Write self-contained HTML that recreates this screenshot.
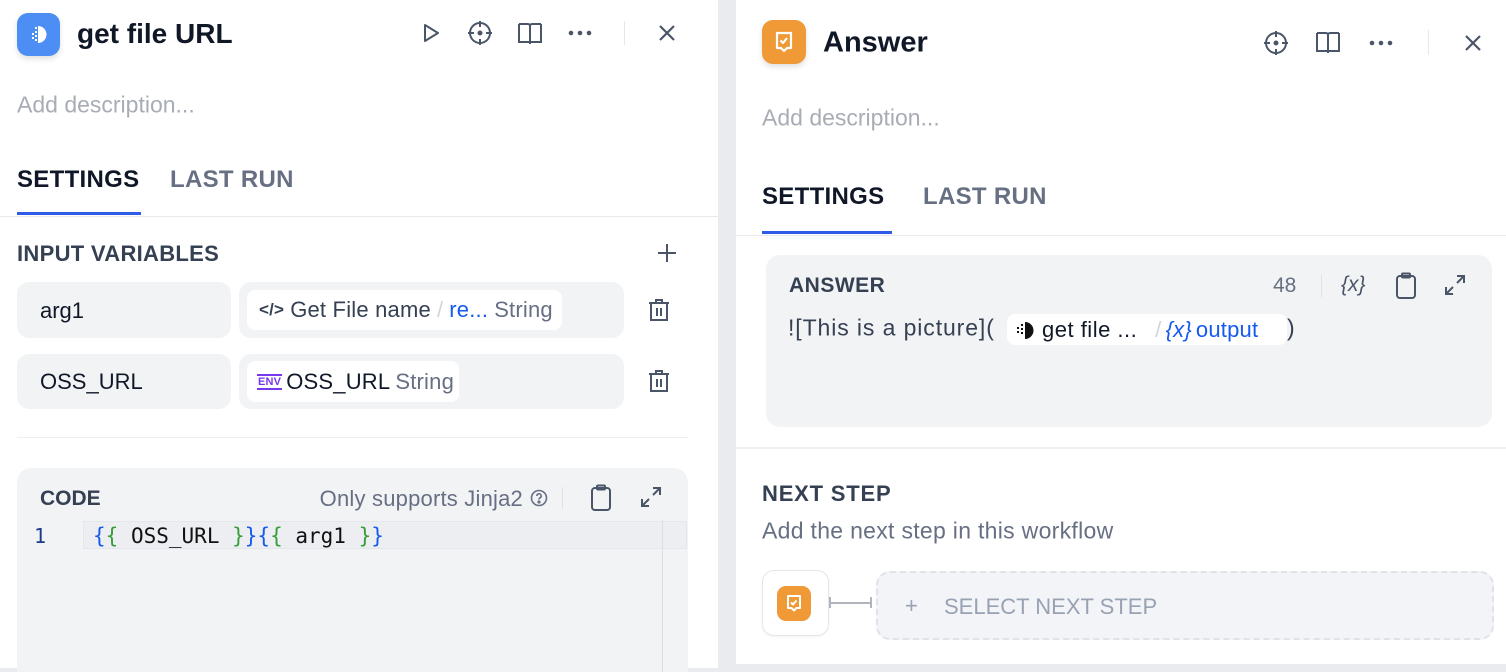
<!DOCTYPE html>
<html><head><meta charset="utf-8"><style>
*{margin:0;padding:0;box-sizing:border-box}
html,body{width:1506px;height:672px;overflow:hidden}
body{background:#eaebee;font-family:"Liberation Sans",sans-serif;position:relative;color:#101828}
.a{position:absolute;white-space:nowrap}
.panel{position:absolute;background:#fff}
.ic{position:absolute;transform:translate(-50%,-50%)}
svg{display:block}
.tab{font-size:24px;letter-spacing:.3px;font-weight:bold;transform:translateY(-50%)}
.sec{font-size:22px;letter-spacing:.3px;font-weight:bold;color:#354052;transform:translateY(-50%)}
.box{position:absolute;background:#f2f3f5;border-radius:12px}
.chip{position:absolute;background:#fff;border-radius:8px;font-size:22px;letter-spacing:.2px;color:#354052;display:flex;align-items:center;overflow:hidden}
.mid{transform:translateY(-50%)}
</style></head><body>
<div class="panel" style="left:0;top:0;width:718px;height:668px"></div>
<div class="panel" style="left:736px;top:0;width:770px;height:664px"></div>

<!-- LEFT -->
<div class="a" style="left:17px;top:13px;width:43px;height:43px;background:#4d8ef5;border-radius:11px;box-shadow:0 3px 6px rgba(0,0,0,.12)">
<svg width="43" height="43"><path d="M21 13 a8.5 8.5 0 0 1 0 17z" fill="#fff"/><g fill="#fff"><rect x="18" y="14" width="2" height="2"/><rect x="18" y="18" width="2" height="2"/><rect x="18" y="22" width="2" height="2"/><rect x="18" y="26" width="2" height="2"/><rect x="15" y="20" width="2" height="2"/><rect x="15" y="24" width="2" height="2"/></g></svg></div>
<div class="a mid" style="left:77px;top:34px;font-size:28px;font-weight:bold">get file URL</div>
<div class="ic" style="left:431px;top:33px"><svg width="22" height="22" fill="none" stroke="#4a5568" stroke-width="2" stroke-linejoin="round"><path d="M5 3l13 8-13 8z"/></svg></div>
<div class="ic" style="left:480px;top:33px"><svg width="26" height="26" fill="none" stroke="#4a5568" stroke-width="2"><circle cx="13" cy="13" r="10"/><path d="M13 1v6M13 19v6M1 13h6M19 13h6"/><circle cx="13" cy="13" r="1.5" fill="#4a5568"/></svg></div>
<div class="ic" style="left:530px;top:34px"><svg width="26" height="26" fill="none" stroke="#4a5568" stroke-width="2"><path d="M2 3h9a2 2 0 0 1 2 2v18M24 3h-9a2 2 0 0 0-2 2M2 3v18h22V3"/></svg></div>
<div class="ic" style="left:580px;top:33px"><svg width="24" height="6" fill="#4a5568"><circle cx="3" cy="3" r="2.3"/><circle cx="12" cy="3" r="2.3"/><circle cx="21" cy="3" r="2.3"/></svg></div>
<div class="a" style="left:624px;top:21px;width:1px;height:24px;background:#e5e7eb"></div>
<div class="ic" style="left:667px;top:33px"><svg width="18" height="18" stroke="#4a5568" stroke-width="2.2"><path d="M2 2l14 14M16 2L2 16"/></svg></div>
<div class="a mid" style="left:17px;top:105px;font-size:23px;color:#a8adb5">Add description...</div>
<div class="a tab" style="left:17px;top:180px;color:#101828">SETTINGS</div>
<div class="a tab" style="left:170px;top:180px;color:#676f83">LAST RUN</div>
<div class="a" style="left:17px;top:212px;width:124px;height:3px;background:#2f5be8"></div>
<div class="a" style="left:0;top:216px;width:718px;height:1px;background:#e8e9ec"></div>
<div class="a sec" style="left:17px;top:254px">INPUT VARIABLES</div>
<div class="ic" style="left:667px;top:253px"><svg width="20" height="20" stroke="#4a5568" stroke-width="2"><path d="M10 1v18M1 10h18"/></svg></div>

<div class="box" style="left:17px;top:282px;width:214px;height:56px"></div>
<div class="a mid" style="left:40px;top:311px;font-size:22px;color:#101828">arg1</div>
<div class="box" style="left:239px;top:282px;width:385px;height:56px"></div>
<div class="chip" style="left:247px;top:290px;width:315px;height:40px;padding-left:12px"><span style="font-size:17px;font-weight:bold;margin-right:6px">&lt;/&gt;</span>Get File name<span style="color:#d0d5dc;margin:0 6px">/</span><span style="color:#155aef">re...</span><span style="color:#676f83;margin-left:6px">String</span></div>
<div class="ic" style="left:659px;top:310px"><svg width="22" height="24" fill="none" stroke="#4a5568" stroke-width="2"><path d="M1 5h20M8 5V2h6v3M3 5v17h16V5M9 10v8M13 10v8"/></svg></div>

<div class="box" style="left:17px;top:354px;width:214px;height:55px"></div>
<div class="a mid" style="left:40px;top:382px;font-size:22px;color:#101828">OSS_URL</div>
<div class="box" style="left:239px;top:354px;width:385px;height:55px"></div>
<div class="chip" style="left:247px;top:361px;width:212px;height:41px;padding-left:10px"><span style="font-size:11px;font-weight:bold;color:#7839ee;border:2px solid #7839ee;border-left:none;border-right:none;padding:0 1px;margin-right:4px;line-height:12px">ENV</span><span style="color:#101828">OSS_URL</span><span style="color:#676f83;margin-left:5px">String</span></div>
<div class="ic" style="left:659px;top:381px"><svg width="22" height="24" fill="none" stroke="#4a5568" stroke-width="2"><path d="M1 5h20M8 5V2h6v3M3 5v17h16V5M9 10v8M13 10v8"/></svg></div>

<div class="a" style="left:17px;top:437px;width:671px;height:1px;background:#eef0f2"></div>
<div class="box" style="left:17px;top:468px;width:671px;height:204px;border-radius:14px 14px 0 0"></div>
<div class="a mid" style="left:40px;top:499px;font-size:21px;font-weight:bold;color:#354052">CODE</div>
<div class="a mid" style="right:983px;top:499px;font-size:22px;letter-spacing:.2px;color:#676f83">Only supports Jinja2</div>
<div class="ic" style="left:539px;top:498px"><svg width="18" height="18" fill="none" stroke="#676f83" stroke-width="1.6"><circle cx="9" cy="9" r="7.5"/><path d="M6.8 7a2.2 2.2 0 1 1 3 2c-.6.3-.8.7-.8 1.5"/><circle cx="9" cy="13" r=".8" fill="#676f83"/></svg></div>
<div class="a" style="left:562px;top:487px;width:1px;height:22px;background:#dfe1e5"></div>
<div class="ic" style="left:601px;top:498px"><svg width="22" height="28" fill="none" stroke="#4a5568" stroke-width="2"><rect x="2" y="4" width="18" height="22" rx="3"/><rect x="7" y="1.5" width="8" height="4" rx="1"/></svg></div>
<div class="ic" style="left:651px;top:497px"><svg width="22" height="22" fill="none" stroke="#4a5568" stroke-width="2"><path d="M13 2h7v7M20 2l-7 7M9 20H2v-7M2 20l7-7"/></svg></div>
<div class="a" style="left:83px;top:521px;width:604px;height:28px;background:#eceef1;border:1px solid #e4e6ea"></div>
<div class="a" style="left:662px;top:520px;width:1px;height:152px;background:#dcdee2"></div>
<div class="a mid" style="left:34px;top:536px;font-family:'DejaVu Sans Mono',monospace;font-size:20px;color:#1e3a8a">1</div>
<div class="a mid" style="left:93px;top:536px;font-family:'DejaVu Sans Mono',monospace;font-size:21px;color:#111"><span style="color:#155aef">{</span><span style="color:#3a9c3a">{</span> OSS_URL <span style="color:#3a9c3a">}</span><span style="color:#155aef">}{</span><span style="color:#3a9c3a">{</span> arg1 <span style="color:#3a9c3a">}</span><span style="color:#155aef">}</span></div>

<!-- RIGHT -->
<div class="a" style="left:762px;top:20px;width:44px;height:44px;background:#ef9a37;border-radius:11px;box-shadow:0 3px 6px rgba(0,0,0,.12)">
<svg width="44" height="44" fill="none" stroke="#fff" stroke-width="2.2" stroke-linejoin="round"><path d="M15 13h14v15h-4l-3 3-3-3h-4z"/><path d="M18.5 20.5l2.5 2.5 4-5"/></svg></div>
<div class="a mid" style="left:823px;top:43px;font-size:29px;font-weight:bold">Answer</div>
<div class="ic" style="left:1276px;top:43px"><svg width="26" height="26" fill="none" stroke="#4a5568" stroke-width="2"><circle cx="13" cy="13" r="10"/><path d="M13 1v6M13 19v6M1 13h6M19 13h6"/><circle cx="13" cy="13" r="1.5" fill="#4a5568"/></svg></div>
<div class="ic" style="left:1328px;top:43px"><svg width="26" height="26" fill="none" stroke="#4a5568" stroke-width="2"><path d="M2 3h9a2 2 0 0 1 2 2v18M24 3h-9a2 2 0 0 0-2 2M2 3v18h22V3"/></svg></div>
<div class="ic" style="left:1381px;top:43px"><svg width="24" height="6" fill="#4a5568"><circle cx="3" cy="3" r="2.3"/><circle cx="12" cy="3" r="2.3"/><circle cx="21" cy="3" r="2.3"/></svg></div>
<div class="a" style="left:1428px;top:30px;width:1px;height:25px;background:#e5e7eb"></div>
<div class="ic" style="left:1473px;top:43px"><svg width="18" height="18" stroke="#4a5568" stroke-width="2.2"><path d="M2 2l14 14M16 2L2 16"/></svg></div>
<div class="a mid" style="left:762px;top:118px;font-size:23px;color:#a8adb5">Add description...</div>
<div class="a tab" style="left:762px;top:197px;color:#101828">SETTINGS</div>
<div class="a tab" style="left:923px;top:197px;color:#676f83">LAST RUN</div>
<div class="a" style="left:762px;top:231px;width:130px;height:3px;background:#2f5be8"></div>
<div class="a" style="left:736px;top:235px;width:770px;height:1px;background:#e8e9ec"></div>

<div class="box" style="left:766px;top:255px;width:726px;height:172px;border-radius:14px"></div>
<div class="a mid" style="left:789px;top:286px;font-size:21px;letter-spacing:.5px;font-weight:bold;color:#354052">ANSWER</div>
<div class="a mid" style="left:1273px;top:286px;font-size:21px;color:#676f83">48</div>
<div class="a" style="left:1321px;top:275px;width:1px;height:22px;background:#dfe1e5"></div>
<div class="a mid" style="left:1341px;top:285px;font-size:21px;color:#4a5568;font-style:italic">{x}</div>
<div class="ic" style="left:1406px;top:286px"><svg width="22" height="28" fill="none" stroke="#4a5568" stroke-width="2"><rect x="2" y="4" width="18" height="22" rx="3"/><rect x="7" y="1.5" width="8" height="4" rx="1"/></svg></div>
<div class="ic" style="left:1455px;top:285px"><svg width="22" height="22" fill="none" stroke="#4a5568" stroke-width="2"><path d="M13 2h7v7M20 2l-7 7M9 20H2v-7M2 20l7-7"/></svg></div>
<div class="a mid" style="left:788px;top:328px;font-size:23px;letter-spacing:.9px;color:#354052">![This is a picture](</div>
<div class="chip" style="left:1007px;top:314px;width:280px;height:31px;padding-left:9px;font-size:22px"><svg width="18" height="18" style="margin-right:8px;flex:none"><path d="M9 1a8 8 0 0 1 0 17z" fill="#111"/><g fill="#111"><rect x="5" y="3" width="2" height="2"/><rect x="5" y="7" width="2" height="2"/><rect x="5" y="11" width="2" height="2"/><rect x="1" y="6" width="2" height="2"/><rect x="1" y="10" width="2" height="2"/></g></svg><span style="color:#101828;letter-spacing:.5px">get file ...</span><span style="color:#d0d5dc;margin:0 4px 0 18px">/</span><span style="color:#155aef;font-style:italic;margin-right:4px">{x}</span><span style="color:#155aef">output</span></div>
<div class="a mid" style="left:1287px;top:328px;font-size:23px;color:#354052">)</div>

<div class="a" style="left:736px;top:447px;width:770px;height:2px;background:#eef0f2"></div>
<div class="a mid" style="left:762px;top:494px;font-size:22px;letter-spacing:.8px;font-weight:bold;color:#354052">NEXT STEP</div>
<div class="a mid" style="left:762px;top:531px;font-size:23px;letter-spacing:.3px;color:#676f83">Add the next step in this workflow</div>
<div class="a" style="left:762px;top:570px;width:67px;height:66px;background:#fff;border:1px solid #e4e6ea;border-radius:12px;box-shadow:0 1px 2px rgba(0,0,0,.05)"></div>
<div class="a" style="left:777px;top:586px;width:34px;height:35px;background:#ef9a37;border-radius:9px">
<svg width="34" height="35" fill="none" stroke="#fff" stroke-width="2" stroke-linejoin="round"><path d="M11 10h12v12h-3.5l-2.5 2.5-2.5-2.5H11z"/><path d="M14 16.5l2 2 3.5-4"/></svg></div>
<div class="a" style="left:830px;top:602px;width:42px;height:2px;background:#b0b5bd"></div>
<div class="a" style="left:829px;top:597px;width:2px;height:11px;background:#b0b5bd"></div>
<div class="a" style="left:870px;top:597px;width:2px;height:11px;background:#b0b5bd"></div>
<div class="a" style="left:876px;top:571px;width:618px;height:69px;background:#f2f4f7;border:2px dashed #dfe2e7;border-radius:14px"></div>
<div class="a mid" style="left:905px;top:606px;font-size:22px;color:#98a2b2">+</div>
<div class="a mid" style="left:944px;top:607px;font-size:22px;color:#98a2b2">SELECT NEXT STEP</div>
</body></html>
